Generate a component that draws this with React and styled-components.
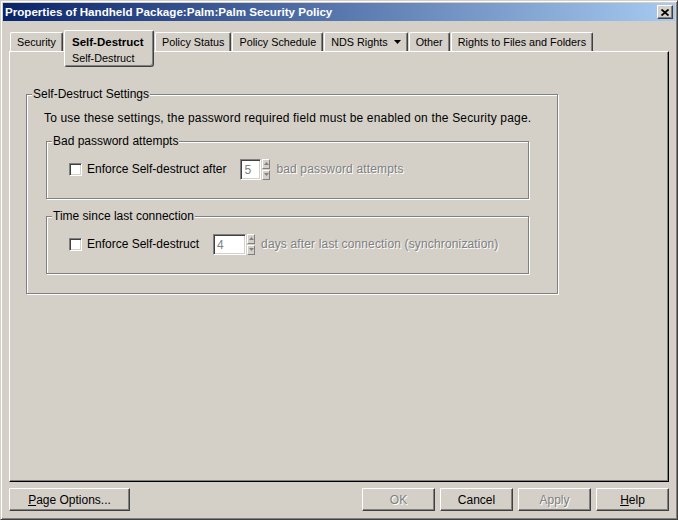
import React from "react";
import styled, { createGlobalStyle, css } from "styled-components";

const GlobalStyle = createGlobalStyle`
  html, body { margin: 0; padding: 0; background: #d4d0c8; }
  body { font-family: "Liberation Sans", Arial, sans-serif; font-size: 12px; color: #000; }
  *, *::before, *::after { box-sizing: border-box; }
`;

const Window = styled.div`
  width: 678px;
  height: 520px;
  background: #d4d0c8;
  border: 1px solid;
  border-color: #d4d0c8 #404040 #404040 #d4d0c8;
  box-shadow: inset 1px 1px 0 #fff, inset -1px -1px 0 #808080;
  padding: 2px;
  display: flex;
  flex-direction: column;
`;

const TitleBar = styled.div`
  flex: none;
  height: 18px;
  background: linear-gradient(to right, #0a246a, #a6caf0);
  display: flex;
  align-items: center;
  justify-content: space-between;
  padding: 0 2px 0 2px;
`;

const TitleText = styled.span`
  color: #fff;
  font-weight: bold;
  font-size: 11.6px;
  line-height: 18px;
  white-space: nowrap;
`;

const CloseButton = styled.button`
  width: 16px;
  height: 14px;
  padding: 0;
  background: #d4d0c8;
  border: 1px solid;
  border-color: #fff #404040 #404040 #fff;
  box-shadow: inset -1px -1px 0 #808080;
  display: flex;
  align-items: center;
  justify-content: center;
`;

const Body = styled.div`
  flex: 1;
  display: flex;
  flex-direction: column;
  padding: 9px 6px 6px 6px;
`;

const TabRow = styled.div`
  flex: none;
  height: 21px;
  display: flex;
  align-items: flex-start;
  gap: 1px;
  padding-left: 1px;
`;

const Tab = styled.div`
  margin-top: 2px;
  height: 19px;
  padding: 0 6px;
  font-size: 10.8px;
  line-height: 18px;
  white-space: nowrap;
  border-left: 1px solid #fff;
  border-top: 1px solid #fff;
  border-right: 1px solid #404040;
  border-radius: 2px 2px 0 0;
  box-shadow: inset -1px 0 0 #808080;
  display: flex;
  align-items: flex-start;
  ${(p) =>
    p.$selected &&
    css`
      position: relative;
      z-index: 1;
      margin-top: 0;
      height: 37px;
      width: 90px;
      padding: 2px 8px 1px 7px;
      flex-direction: column;
      background: #d4d0c8;
      border-bottom: 1px solid #404040;
      border-radius: 2px 2px 3px 3px;
      box-shadow: inset -1px -1px 0 #808080;
    `}
`;

const TabTitle = styled.span`
  font-weight: bold;
  font-size: 11.5px;
  line-height: 18px;
`;

const TabSub = styled.span`
  font-size: 10.8px;
  line-height: 14px;
`;

const TabArrow = styled.svg`
  margin: 7px 0 0 6px;
`;

const Panel = styled.div`
  flex: none;
  height: 431px;
  border: 1px solid;
  border-color: #fff #000 #000 #fff;
  box-shadow: inset -1px -1px 0 #808080;
  padding: 42px 0 0 16px;
`;

const Frame = styled.div`
  width: ${(p) => p.$width}px;
  margin: ${(p) => p.$mt || 0}px 0 0 ${(p) => p.$ml || 0}px;
  padding: 0 ${(p) => p.$pr || 0}px ${(p) => p.$pb}px ${(p) => p.$pl}px;
  border: 1px solid #808080;
  box-shadow: 1px 1px 0 #fff, inset 1px 1px 0 #fff;
`;

const Caption = styled.div`
  width: fit-content;
  margin: -8px 0 0 ${(p) => p.$ml}px;
  padding: 0 1px;
  background: #d4d0c8;
  line-height: 14px;
  white-space: nowrap;
`;

const Description = styled.p`
  margin: 10px 0 0 0;
  line-height: 14px;
  letter-spacing: 0.17px;
  white-space: nowrap;
`;

const Row = styled.div`
  display: flex;
  align-items: center;
  height: 22px;
  margin-top: ${(p) => p.$mt}px;
`;

const CheckBox = styled.span`
  width: 13px;
  height: 13px;
  flex: none;
  background: #fff;
  border: 1px solid;
  border-color: #808080 #fff #fff #808080;
  box-shadow: inset 1px 1px 0 #404040, inset -1px -1px 0 #d4d0c8;
`;

const Label = styled.span`
  margin-left: 5px;
  line-height: 14px;
  white-space: nowrap;
`;

const Spinner = styled.div`
  display: flex;
  align-items: stretch;
  height: 21px;
  margin-left: 14px;
  gap: 1px;
`;

const SpinInput = styled.div`
  width: ${(p) => p.$width}px;
  background: #fff;
  border: 1px solid;
  border-color: #808080 #fff #fff #808080;
  box-shadow: inset 1px 1px 0 #404040, inset -1px -1px 0 #d4d0c8;
  color: #808080;
  padding: 3px 0 0 3px;
  line-height: 14px;
`;

const SpinButtons = styled.div`
  display: flex;
  flex-direction: column;
  justify-content: space-between;
  width: 8px;
`;

const SpinButton = styled.div`
  height: 10px;
  background: #d4d0c8;
  border: 1px solid;
  border-color: #fff #808080 #808080 #fff;
  display: flex;
  align-items: center;
  justify-content: center;
`;

const DisabledText = styled.span`
  margin-left: 6px;
  color: #808080;
  text-shadow: 1px 1px 0 #fff;
  line-height: 14px;
  letter-spacing: 0.15px;
  white-space: nowrap;
`;

const ButtonBar = styled.div`
  flex: none;
  margin-top: 6px;
  height: 23px;
  display: flex;
  justify-content: space-between;
`;

const ButtonGroup = styled.div`
  display: flex;
  gap: 5px;
`;

const Button = styled.button`
  width: ${(p) => p.$width || 73}px;
  height: 23px;
  padding: 0;
  font-family: "Liberation Sans", Arial, sans-serif;
  font-size: 12px;
  background: #d4d0c8;
  color: ${(p) => (p.$disabled ? "#808080" : "#000")};
  text-shadow: ${(p) => (p.$disabled ? "1px 1px 0 #fff" : "none")};
  border: 1px solid;
  border-color: #fff #404040 #404040 #fff;
  box-shadow: inset -1px -1px 0 #808080;
  u { text-decoration: underline; }
`;

const Up = () => (
  <svg width="5" height="3" viewBox="0 0 5 3">
    <polygon points="2.5,0 5,3 0,3" fill="#808080" />
  </svg>
);
const Down = () => (
  <svg width="5" height="3" viewBox="0 0 5 3">
    <polygon points="0,0 5,0 2.5,3" fill="#808080" />
  </svg>
);

const Spin = ({ value, width }) => (
  <Spinner>
    <SpinInput $width={width}>{value}</SpinInput>
    <SpinButtons>
      <SpinButton><Up /></SpinButton>
      <SpinButton><Down /></SpinButton>
    </SpinButtons>
  </Spinner>
);

export default function App() {
  return (
    <>
      <GlobalStyle />
      <Window>
        <TitleBar>
          <TitleText>Properties of Handheld Package:Palm:Palm Security Policy</TitleText>
          <CloseButton aria-label="Close">
            <svg width="8" height="7" viewBox="0 0 8 7">
              <path d="M0.5 0.5 L7.5 6.5 M7.5 0.5 L0.5 6.5" stroke="#000" strokeWidth="1.8" />
            </svg>
          </CloseButton>
        </TitleBar>
        <Body>
          <TabRow>
            <Tab>Security</Tab>
            <Tab $selected>
              <TabTitle>Self-Destruct</TabTitle>
              <TabSub>Self-Destruct</TabSub>
            </Tab>
            <Tab>Policy Status</Tab>
            <Tab>Policy Schedule</Tab>
            <Tab>
              NDS Rights
              <TabArrow width="7" height="4" viewBox="0 0 7 4">
                <polygon points="0,0 7,0 3.5,4" fill="#000" />
              </TabArrow>
            </Tab>
            <Tab>Other</Tab>
            <Tab>Rights to Files and Folders</Tab>
          </TabRow>
          <Panel>
            <Frame $width={532} $pl={17} $pr={28} $pb={19}>
              <Caption $ml={-12}>Self-Destruct Settings</Caption>
              <Description>
                To use these settings, the password required field must be enabled on the Security page.
              </Description>
              <Frame $width={483} $ml={2} $mt={16} $pl={22} $pb={18}>
                <Caption $ml={-17}>Bad password attempts</Caption>
                <Row $mt={10}>
                  <CheckBox />
                  <Label>Enforce Self-destruct after</Label>
                  <Spin value="5" width={21} />
                  <DisabledText>bad password attempts</DisabledText>
                </Row>
              </Frame>
              <Frame $width={483} $ml={2} $mt={17} $pl={22} $pb={18}>
                <Caption $ml={-17}>Time since last connection</Caption>
                <Row $mt={10}>
                  <CheckBox />
                  <Label>Enforce Self-destruct</Label>
                  <Spin value="4" width={33} />
                  <DisabledText>days after last connection (synchronization)</DisabledText>
                </Row>
              </Frame>
            </Frame>
          </Panel>
          <ButtonBar>
            <Button $width={121}><u>P</u>age Options...</Button>
            <ButtonGroup>
              <Button $disabled>OK</Button>
              <Button>Cancel</Button>
              <Button $disabled>Apply</Button>
              <Button><u>H</u>elp</Button>
            </ButtonGroup>
          </ButtonBar>
        </Body>
      </Window>
    </>
  );
}
